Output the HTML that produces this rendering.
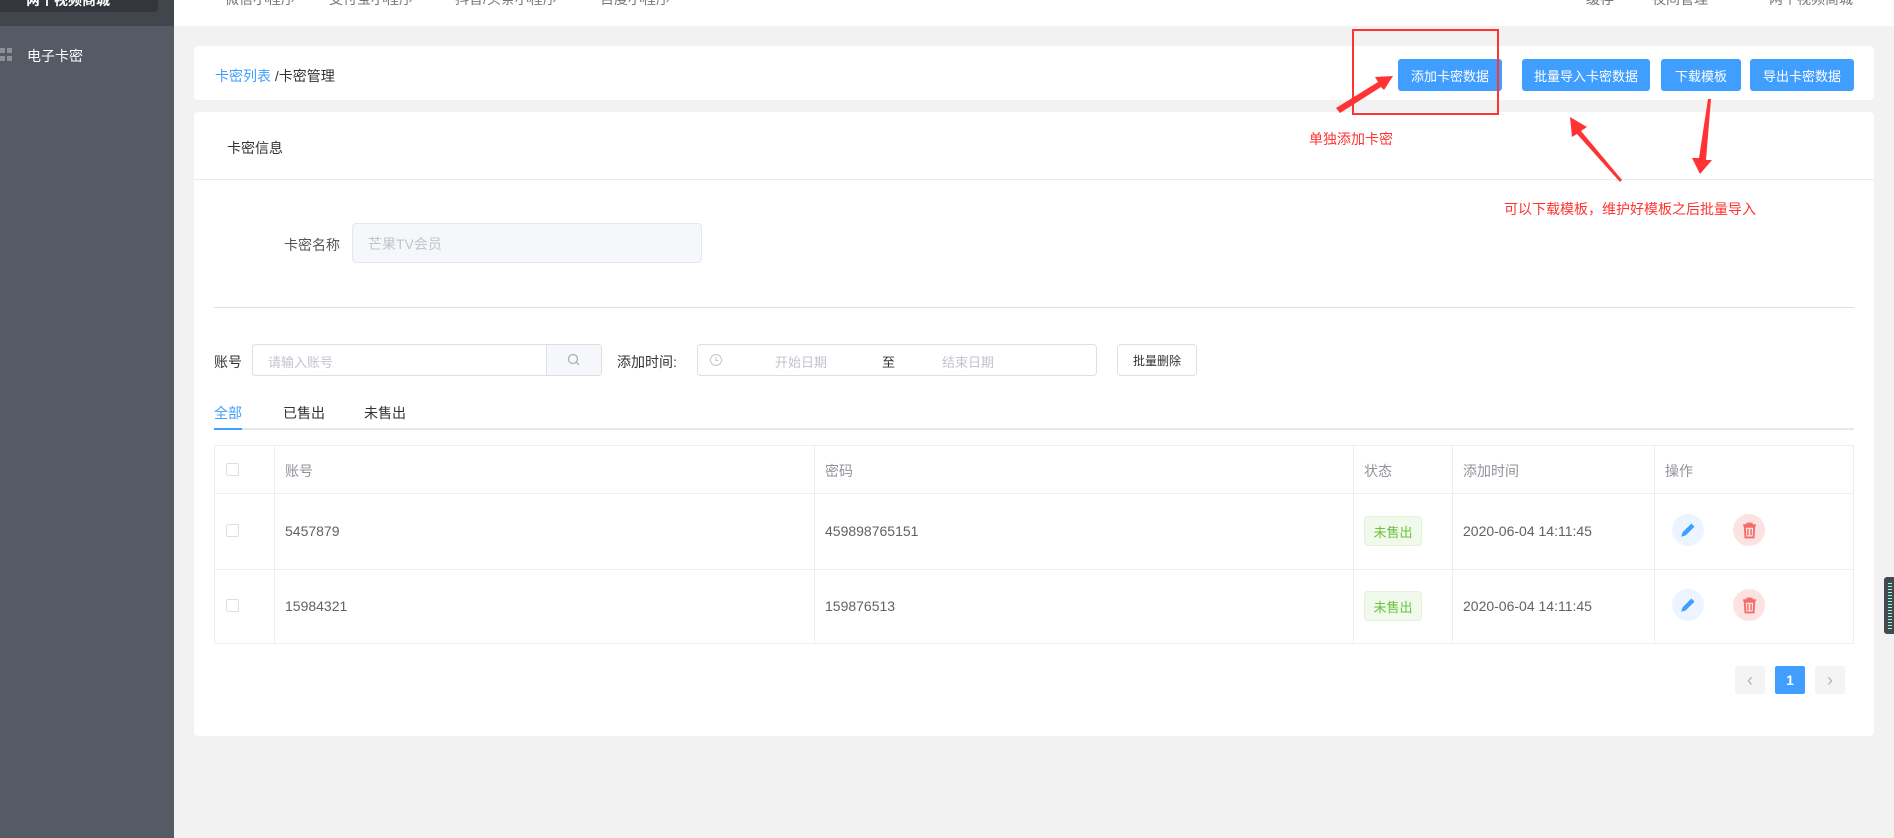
<!DOCTYPE html>
<html><head><meta charset="utf-8"><style>
*{margin:0;padding:0;box-sizing:border-box}
body{width:1894px;height:838px;overflow:hidden;background:#f2f2f2;font-family:"Liberation Sans","Noto Sans CJK SC",sans-serif;position:relative;color:#333}
.a{position:absolute}
.side{left:0;top:0;width:174px;height:838px;background:#545b64}
.btn{position:absolute;top:59px;height:32px;background:#409eff;color:#fff;font-size:13px;border-radius:3px;display:flex;align-items:center;justify-content:center}
.t{position:absolute;white-space:nowrap}
.vl{position:absolute;top:445px;width:1px;height:199px;background:#ebeef5}
.hl{position:absolute;left:214px;width:1640px;height:1px;background:#ebeef5}
.cb{position:absolute;left:226px;width:13px;height:13px;border:1px solid #dcdfe6;border-radius:2px;background:#fff}
.tag{position:absolute;left:1364px;width:58px;height:30px;background:#f0f9eb;border:1px solid #e1f3d8;color:#67c23a;font-size:13px;border-radius:4px;display:flex;align-items:center;justify-content:center}
.circ{position:absolute;width:32px;height:32px;border-radius:50%;display:flex;align-items:center;justify-content:center}
</style></head><body>
<div class="a side"></div>
<div class="a" style="left:0;top:0;width:174px;height:26px;background:#41464d"></div>
<div class="a" style="left:0;top:0;width:158px;height:12px;background:#33373d;border-radius:0 0 4px 0"></div>
<div class="t" style="left:26px;top:-10px;color:#fff;font-size:14px;font-weight:bold">两个视频商城</div>
<div class="a" style="left:0;top:48px;width:5px;height:5px;background:#8a9097"></div>
<div class="a" style="left:7px;top:48px;width:5px;height:5px;background:#8a9097"></div>
<div class="a" style="left:0;top:56px;width:5px;height:5px;background:#8a9097"></div>
<div class="a" style="left:7px;top:56px;width:5px;height:5px;background:#8a9097"></div>
<div class="t" style="left:27px;top:46px;color:#fff;font-size:14px">电子卡密</div>
<div class="a" style="left:174px;top:0;width:1720px;height:26px;background:#fff"></div>
<div class="t" style="left:225px;top:-11px;color:#777;font-size:14px">微信小程序</div>
<div class="t" style="left:329px;top:-11px;color:#777;font-size:14px">支付宝小程序</div>
<div class="t" style="left:455px;top:-11px;color:#777;font-size:14px">抖音/头条小程序</div>
<div class="t" style="left:600px;top:-11px;color:#777;font-size:14px">百度小程序</div>
<div class="t" style="left:1586px;top:-11px;color:#777;font-size:14px">缓存</div>
<div class="t" style="left:1652px;top:-11px;color:#777;font-size:14px">夜间管理</div>
<div class="t" style="left:1769px;top:-11px;color:#777;font-size:14px">两个视频商城</div>

<div class="a" style="left:194px;top:46px;width:1680px;height:54px;background:#fff;border-radius:4px"></div>
<div class="t" style="left:215px;top:66px;font-size:14px"><span style="color:#409eff">卡密列表</span> /卡密管理</div>
<div class="btn" style="left:1398px;width:104px">添加卡密数据</div>
<div class="btn" style="left:1522px;width:128px">批量导入卡密数据</div>
<div class="btn" style="left:1661px;width:80px">下载模板</div>
<div class="btn" style="left:1750px;width:104px">导出卡密数据</div>

<div class="a" style="left:194px;top:112px;width:1680px;height:624px;background:#fff;border-radius:4px"></div>
<div class="t" style="left:227px;top:138px;font-size:14px">卡密信息</div>
<div class="a" style="left:194px;top:179px;width:1680px;height:1px;background:#e8eaee"></div>
<div class="t" style="left:284px;top:235px;font-size:14px;color:#555">卡密名称</div>
<div class="a" style="left:352px;top:223px;width:350px;height:40px;background:#f5f7fa;border:1px solid #e4e7ed;border-radius:4px"></div>
<div class="t" style="left:368px;top:234px;font-size:14px;color:#c0c4cc">芒果TV会员</div>
<div class="a" style="left:214px;top:307px;width:1640px;height:1px;background:#dcdfe6"></div>

<div class="t" style="left:214px;top:352px;font-size:14px">账号</div>
<div class="a" style="left:252px;top:344px;width:350px;height:32px;border:1px solid #dcdfe6;border-radius:4px"></div>
<div class="a" style="left:546px;top:345px;width:55px;height:30px;background:#f5f7fa;border-left:1px solid #dcdfe6;border-radius:0 4px 4px 0"></div>
<svg class="a" style="left:567px;top:353px" width="14" height="14" viewBox="0 0 14 14"><circle cx="6" cy="6" r="4.5" fill="none" stroke="#a8abb2" stroke-width="1.2"/><path d="M9.3 9.3L12 12" stroke="#a8abb2" stroke-width="1.2"/></svg>
<div class="t" style="left:268px;top:352px;font-size:13px;color:#c0c4cc">请输入账号</div>
<div class="t" style="left:617px;top:352px;font-size:14px">添加时间:</div>
<div class="a" style="left:697px;top:344px;width:400px;height:32px;border:1px solid #dcdfe6;border-radius:4px"></div>
<svg class="a" style="left:709px;top:353px" width="14" height="14" viewBox="0 0 14 14"><circle cx="7" cy="7" r="5.5" fill="none" stroke="#c0c4cc"/><path d="M7 4v3.5h2.5" fill="none" stroke="#c0c4cc"/></svg>
<div class="t" style="left:775px;top:352px;font-size:13px;color:#c0c4cc">开始日期</div>
<div class="t" style="left:882px;top:352px;font-size:13px;color:#333">至</div>
<div class="t" style="left:942px;top:352px;font-size:13px;color:#c0c4cc">结束日期</div>
<div class="a" style="left:1117px;top:344px;width:80px;height:32px;border:1px solid #dcdfe6;border-radius:4px;font-size:12px;display:flex;align-items:center;justify-content:center">批量删除</div>

<div class="t" style="left:214px;top:403px;font-size:14px;color:#409eff">全部</div>
<div class="t" style="left:283px;top:403px;font-size:14px">已售出</div>
<div class="t" style="left:364px;top:403px;font-size:14px">未售出</div>
<div class="a" style="left:214px;top:428px;width:1640px;height:2px;background:#e4e7ed"></div>
<div class="a" style="left:214px;top:428px;width:28px;height:2px;background:#409eff"></div>

<div class="a" style="left:214px;top:445px;width:1640px;height:199px;border:1px solid #ebeef5"></div>
<div class="hl" style="top:493px"></div><div class="hl" style="top:569px"></div>
<div class="vl" style="left:274px"></div><div class="vl" style="left:814px"></div><div class="vl" style="left:1353px"></div><div class="vl" style="left:1452px"></div><div class="vl" style="left:1654px"></div>
<div class="cb" style="top:463px"></div><div class="cb" style="top:524px"></div><div class="cb" style="top:599px"></div>
<div class="t" style="left:285px;top:461px;font-size:14px;color:#909399">账号</div>
<div class="t" style="left:825px;top:461px;font-size:14px;color:#909399">密码</div>
<div class="t" style="left:1364px;top:461px;font-size:14px;color:#909399">状态</div>
<div class="t" style="left:1463px;top:461px;font-size:14px;color:#909399">添加时间</div>
<div class="t" style="left:1665px;top:461px;font-size:14px;color:#909399">操作</div>
<div class="t" style="left:285px;top:523px;font-size:14px;color:#606266">5457879</div>
<div class="t" style="left:825px;top:523px;font-size:14px;color:#606266">459898765151</div>
<div class="t" style="left:1463px;top:523px;font-size:14px;color:#606266">2020-06-04 14:11:45</div>
<div class="t" style="left:285px;top:598px;font-size:14px;color:#606266">15984321</div>
<div class="t" style="left:825px;top:598px;font-size:14px;color:#606266">159876513</div>
<div class="t" style="left:1463px;top:598px;font-size:14px;color:#606266">2020-06-04 14:11:45</div>
<div class="tag" style="top:516px">未售出</div>
<div class="tag" style="top:591px">未售出</div>
<div class="circ" style="left:1672px;top:514px;background:#ecf5ff"><svg width="18" height="18" viewBox="0 0 16 16"><path d="M2 14l1.2-4 7.8-7.8 2.8 2.8-7.8 7.8z" fill="#409eff"/></svg></div>
<div class="circ" style="left:1733px;top:514px;background:#fde2e2"><svg width="15" height="17" viewBox="0 0 14 16"><path d="M1 3h12M5 3V1.5h4V3M2.5 4.5h9l-.7 10H3.2z" fill="none" stroke="#f56c6c" stroke-width="1.8"/><path d="M5.5 6.5v6M8.5 6.5v6" stroke="#f56c6c" stroke-width="1.4"/></svg></div>
<div class="circ" style="left:1672px;top:589px;background:#ecf5ff"><svg width="18" height="18" viewBox="0 0 16 16"><path d="M2 14l1.2-4 7.8-7.8 2.8 2.8-7.8 7.8z" fill="#409eff"/></svg></div>
<div class="circ" style="left:1733px;top:589px;background:#fde2e2"><svg width="15" height="17" viewBox="0 0 14 16"><path d="M1 3h12M5 3V1.5h4V3M2.5 4.5h9l-.7 10H3.2z" fill="none" stroke="#f56c6c" stroke-width="1.8"/><path d="M5.5 6.5v6M8.5 6.5v6" stroke="#f56c6c" stroke-width="1.4"/></svg></div>

<div class="a" style="left:1735px;top:666px;width:30px;height:28px;background:#f4f4f5;border-radius:2px;color:#b0b4bc;font-size:18px;display:flex;align-items:center;justify-content:center">‹</div>
<div class="a" style="left:1775px;top:666px;width:30px;height:28px;background:#409eff;border-radius:2px;color:#fff;font-size:14px;font-weight:bold;display:flex;align-items:center;justify-content:center">1</div>
<div class="a" style="left:1815px;top:666px;width:30px;height:28px;background:#f4f4f5;border-radius:2px;color:#b0b4bc;font-size:18px;display:flex;align-items:center;justify-content:center">›</div>
<div class="a" style="left:1884px;top:577px;width:10px;height:57px;background:#444a50;border-radius:3px 0 0 3px"></div>
<div class="a" style="left:1888px;top:583px;width:4px;height:46px;background:repeating-linear-gradient(#8fd 0 1px,transparent 1px 3px)"></div>

<div class="a" style="left:1352px;top:29px;width:147px;height:86px;border:2px solid #f33"></div>
<svg class="a" style="left:0;top:0" width="1894" height="838">
<polygon points="1336,108 1378,82 1375,77 1393,76 1384,90 1381,87 1340,113" fill="#f33"/>
<polygon points="1570,117 1587,127 1581,131 1622,180 1620,182 1577,134 1572,137" fill="#f33"/>
<polygon points="1711,99 1706,160 1712,160 1700,174 1692,158 1699,158 1708,99" fill="#f33"/>
</svg>
<div class="t" style="left:1309px;top:129px;font-size:14px;color:#f33">单独添加卡密</div>
<div class="t" style="left:1504px;top:199px;font-size:14px;color:#f33">可以下载模板，维护好模板之后批量导入</div>
</body></html>
